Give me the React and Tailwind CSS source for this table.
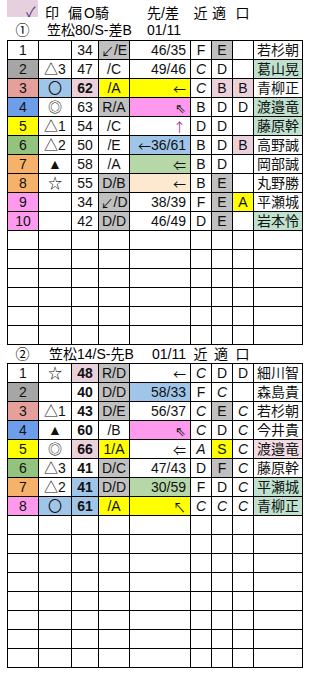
const FONT = "font-['Liberation_Sans','Noto_Sans_CJK_JP',sans-serif]";

const cols = 'grid grid-cols-[31px_33px_27px_31px_61px_21px_21px_21px_49px] w-fit ml-[7px] border-l border-t border-black';
const cell = 'h-[19px] border-r border-b border-black flex items-center justify-center leading-none text-[14px] text-[#111]';

// each row: [num, numBg, mark, markBg, score, scoreCls, pos, posBg, diff, diffCls, near, nearCls, fit, fitCls, kou, kouCls, name, nameBg]
const race1 = [
  ['1', '', '', '', '34', '', '↙/E', 'bg-[#c0c0c0]', '46/35', '', 'F', '', 'E', 'bg-[#c0c0c0]', '', '', '若杉朝', ''],
  ['2', 'bg-[#a6a6a6]', '△3', '', '47', '', '/C', '', '49/46', '', 'C', 'italic', 'D', '', '', '', '葛山晃', 'bg-[#bfe1ce]'],
  ['3', 'bg-[#e6a09c]', '〇', 'bg-[#9fc5e8]', '62', 'font-bold bg-[#ead1dc]', '/A', 'bg-[#ffff00]', '←', 'bg-[#ffff00]', 'C', 'italic', 'B', 'bg-[#ead1dc]', 'B', 'bg-[#ead1dc]', '青柳正', ''],
  ['4', 'bg-[#6d9eeb]', '◎', '', '63', '', 'R/A', 'bg-[#c0c0c0]', '⇖', 'bg-[#ff99ee] text-[#7b3fa8]', 'B', '', 'D', '', 'D', '', '渡邉竜', 'bg-[#bfe1ce]'],
  ['5', 'bg-[#ffff00]', '△1', '', '54', '', '/C', '', '↑', 'text-[#a0409a]', 'D', '', 'D', '', '', '', '藤原幹', 'bg-[#bfe1ce]'],
  ['6', 'bg-[#93c47d]', '△2', '', '50', '', '/E', '', '←36/61', 'bg-[#9fc5e8]', 'B', '', 'D', '', 'B', 'bg-[#ead1dc]', '高野誠', ''],
  ['7', 'bg-[#f6b26b]', '▲', '', '58', '', '/A', '', '⇐', 'bg-[#b6d7a8]', 'B', '', 'D', '', '', '', '岡部誠', ''],
  ['8', 'bg-[#f6b26b]', '☆', '', '55', '', 'D/B', 'bg-[#c0c0c0]', '←', 'bg-[#fde9cf]', 'B', '', 'E', 'bg-[#c0c0c0]', '', '', '丸野勝', ''],
  ['9', 'bg-[#ff99ee]', '', '', '34', '', '↙/D', 'bg-[#c0c0c0]', '38/39', '', 'F', '', 'E', 'bg-[#c0c0c0]', 'A', 'bg-[#ffff00]', '平瀬城', ''],
  ['10', 'bg-[#ff99ee]', '', '', '42', '', 'D/D', 'bg-[#c0c0c0]', '46/49', '', 'D', '', 'E', 'bg-[#c0c0c0]', '', '', '岩本怜', 'bg-[#bfe1ce]'],
];

const race2 = [
  ['1', '', '☆', '', '48', 'font-bold bg-[#ead1dc]', 'R/D', 'bg-[#c0c0c0]', '←', '', 'C', 'italic', 'D', '', 'D', '', '細川智', ''],
  ['2', 'bg-[#a6a6a6]', '', '', '40', 'font-bold', 'D/D', 'bg-[#c0c0c0]', '58/33', 'bg-[#9fc5e8]', 'F', '', 'C', 'italic', '', '', '森島貴', ''],
  ['3', 'bg-[#e6a09c]', '△1', '', '43', 'font-bold', 'D/E', 'bg-[#c0c0c0]', '56/37', '', 'C', 'italic', 'E', 'bg-[#c0c0c0]', 'C', 'italic', '若杉朝', ''],
  ['4', 'bg-[#6d9eeb]', '▲', '', '60', 'font-bold', '/B', '', '⇖', 'bg-[#ff99ee] text-[#7b3fa8]', 'C', 'italic', 'D', '', 'C', 'italic', '今井貴', ''],
  ['5', 'bg-[#ffff00]', '◎', '', '66', 'font-bold bg-[#ead1dc]', '1/A', 'bg-[#ffff00]', '⇐', '', 'A', 'italic', 'S', 'bg-[#ffff00]', 'C', 'italic', '渡邉竜', 'bg-[#f2dce4]'],
  ['6', 'bg-[#93c47d]', '△3', '', '41', 'font-bold', 'D/C', 'bg-[#c0c0c0]', '47/43', '', 'D', '', 'F', 'bg-[#c0c0c0]', 'C', 'italic', '藤原幹', ''],
  ['7', 'bg-[#f6b26b]', '△2', '', '41', 'font-bold bg-[#9fc5e8]', 'D/D', 'bg-[#c0c0c0]', '30/59', 'bg-[#b6d7a8]', 'F', '', 'D', '', 'C', 'italic', '平瀬城', 'bg-[#bfe1ce]'],
  ['8', 'bg-[#ff99ee]', '〇', 'bg-[#9fc5e8]', '61', 'font-bold bg-[#9fc5e8]', '/A', 'bg-[#ffff00]', '↖', 'bg-[#ffff00] text-[#7a7a00]', 'C', 'italic', 'C', 'italic', 'C', 'italic', '青柳正', 'bg-[#bfe1ce]'],
];

// arrows look bigger in the sheet, give them the CJK face
function Txt({ s }) {
  const parts = s.split(/([←↑↖↙⇐⇖])/).filter(Boolean);
  return parts.map((p, i) =>
    /[←↑↖↙⇐⇖]/.test(p) ? (
      <span key={i} className="font-['Noto_Sans_CJK_JP',sans-serif] text-[13px]">{p}</span>
    ) : (
      <span key={i}>{p}</span>
    )
  );
}

function RaceTable({ rows, total = 16 }) {
  const blanks = [...Array(total - rows.length)];
  return (
    <div className={cols}>
      {rows.map((r, i) => (
        <div key={i} className="contents">
          <div className={`${cell} ${r[1]}`}>{r[0]}</div>
          <div className={`${cell} ${r[3]}`}>{r[2]}</div>
          <div className={`${cell} ${r[5]}`}>{r[4]}</div>
          <div className={`${cell} ${r[7]}`}><Txt s={r[6]} /></div>
          <div className={`${cell} !justify-end pr-[4px] ${r[9]}`}><Txt s={r[8]} /></div>
          <div className={`${cell} ${r[11]}`}>{r[10]}</div>
          <div className={`${cell} ${r[13]}`}>{r[12]}</div>
          <div className={`${cell} ${r[15]}`}>{r[14]}</div>
          <div className={`${cell} ${r[17]}`}>{r[16]}</div>
        </div>
      ))}
      {blanks.map((_, i) => (
        <div key={`b${i}`} className="contents">
          {[...Array(9)].map((__, j) => (
            <div key={j} className={cell}></div>
          ))}
        </div>
      ))}
    </div>
  );
}

export default function App() {
  return (
    <div className={`w-[309px] h-[673px] bg-white text-black text-[14px] ${FONT}`}>
      {/* column header */}
      <div className="flex items-start h-[20px] leading-[14px]">
        <span className="ml-[7px] w-[31px] h-[17px] bg-[#e6d0de] pl-[19px] pt-[5px] text-[#4b3f8a]">✓</span>
        <span className="w-[24px] pl-[7px] pt-[6px]">印</span>
        <span className="w-[20px] pl-[6px] pt-[6px]">偏</span>
        <span className="w-[65px] pl-[2px] pt-[6px]">O騎</span>
        <span className="w-[43px] pt-[6px]">先/差</span>
        <span className="w-[21px] text-center pt-[6px]">近</span>
        <span className="w-[21px] pl-[1px] pt-[6px]">適</span>
        <span className="w-[21px] text-center pt-[6px]">口</span>
      </div>

      {/* race 1 */}
      <div className="flex items-center h-[20px] leading-[14px]">
        <span className="ml-[7px] w-[31px] text-center">①</span>
        <span className="w-[109px] pl-[9px]">笠松80/S-差B</span>
        <span>01/11</span>
      </div>
      <RaceTable rows={race1} />

      {/* race 2 */}
      <div className="flex items-center h-[18px] leading-[14px]">
        <span className="ml-[7px] w-[31px] text-center">②</span>
        <span className="w-[114px] pl-[11px]">笠松14/S-先B</span>
        <span className="w-[38px]">01/11</span>
        <span className="w-[21px] text-center">近</span>
        <span className="w-[21px] pl-[3px]">適</span>
        <span className="w-[21px] text-center">口</span>
      </div>
      <RaceTable rows={race2} />
    </div>
  );
}
